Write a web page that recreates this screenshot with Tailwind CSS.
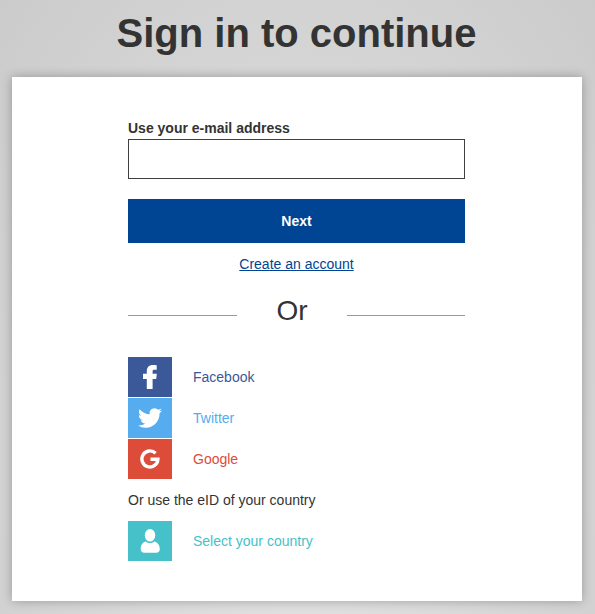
<!DOCTYPE html>
<html lang="en">
<head>
    <meta charset="UTF-8">
    <title>Sign in to continue</title>
    <script src="https://cdn.jsdelivr.net/npm/@tailwindcss/browser@4"></script>
</head>
<body class="h-[614px] overflow-hidden bg-[radial-gradient(ellipse_at_50%_75%,#e5e5e5,#cbcbcb)] font-['Liberation_Sans',Arial,sans-serif] text-[#333333]">
    <h1 class="h-[77px] pt-[10px] pr-[2px] text-center text-[40px] leading-[46px] font-bold">Sign in to continue</h1>

    <div class="ml-[12px] h-[524px] w-[570px] bg-white pt-[43px] pl-[116px] shadow-[0_0_10px_rgba(0,0,0,0.28)]">
        <div class="w-[337px]">
            <label class="block h-[19px] text-sm leading-4 font-bold">Use your e-mail address</label>
            <input type="text" class="block h-[40px] w-full border border-[#404040] bg-white">

            <button class="mt-[20px] block h-[44px] w-full bg-[#004494] text-sm font-bold text-white">Next</button>

            <p class="mt-[12px] h-[18px] text-center text-sm leading-[18px]">
                <a href="#" class="text-[#004494] underline">Create an account</a>
            </p>

            <div class="mt-[20px] flex h-[36px] items-center justify-between">
                <span class="mt-[8px] h-px w-[109px] bg-[#999999]"></span>
                <span class="text-[28px] leading-[36px]">Or</span>
                <span class="mt-[8px] h-px w-[118px] bg-[#999999]"></span>
            </div>

            <div class="mt-[28px] flex flex-col gap-px">
                <a href="#" class="flex h-[40px] items-center gap-[21px] text-sm text-[#3b5998]">
                    <span class="flex h-[40px] w-[44px] items-center justify-center bg-[#3b5998]">
                        <svg width="14" height="24" viewBox="0 0 14 24" fill="#ffffff"><path d="M3.800 24V14H0V8.700h3.800V6.200C3.800 2 6.300 0 9.800 0c1.700 0 3.200.1 3.900.2v4.500h-2.600c-1.200 0-1.500.7-1.500 1.700v2.300h4.200l-.6 5.300H9.600V24z"/></svg>
                    </span>
                    Facebook
                </a>
                <a href="#" class="flex h-[40px] items-center gap-[21px] text-sm text-[#55acee]">
                    <span class="flex h-[40px] w-[44px] items-center justify-center bg-[#55acee]">
                        <svg width="24" height="24" viewBox="0 0 24 24" fill="#ffffff"><path d="M23.950 4.570a10 10 0 0 1-2.820.770 4.960 4.960 0 0 0 2.160-2.720c-.950.550-2 .950-3.130 1.180a4.920 4.920 0 0 0-8.380 4.480C7.690 8.090 4.070 6.130 1.640 3.160a4.820 4.820 0 0 0-.670 2.480c0 1.710.870 3.210 2.190 4.100a4.900 4.900 0 0 1-2.230-.620v.060a4.920 4.920 0 0 0 3.950 4.830 4.940 4.940 0 0 1-2.210.080 4.940 4.940 0 0 0 4.600 3.420A9.870 9.870 0 0 1 0 19.540a13.940 13.940 0 0 0 7.550 2.210c9.050 0 14-7.500 14-13.980 0-.210 0-.420-.020-.630a9.940 9.940 0 0 0 2.460-2.550z"/></svg>
                    </span>
                    Twitter
                </a>
                <a href="#" class="flex h-[40px] items-center gap-[21px] text-sm text-[#dd4b39]">
                    <span class="flex h-[40px] w-[44px] items-center justify-center bg-[#dd4b39]">
                        <svg width="20" height="20" viewBox="0 0 20 20" fill="none" stroke="#ffffff" stroke-width="3.400"><path d="M15.600 4.300A8 8 0 1 0 17.900 10.200H10.500"/></svg>
                    </span>
                    Google
                </a>
            </div>

            <p class="mt-[13px] h-[20px] text-sm leading-[16px]">Or use the eID of your country</p>

            <a href="#" class="mt-[9px] flex h-[40px] items-center gap-[21px] text-sm text-[#46c1c9]">
                <span class="flex h-[40px] w-[44px] items-center justify-center bg-[#46c1c9]">
                    <svg width="20" height="24" viewBox="0 0 20 24" fill="#ffffff"><ellipse cx="10" cy="6.300" rx="5.200" ry="6.300"/><path d="M.7 20c0-4.500 2.500-6.800 5-7.500 1.200 1 2.600 1.500 4.300 1.500s3.100-.5 4.300-1.500c2.500.7 5.500 3 5.500 7.500 0 2.500-1.500 3.700-3.500 3.700H4.200C2.200 23.700.7 22.500.7 20z"/></svg>
                </span>
                Select your country
            </a>
        </div>
    </div>
</body>
</html>
